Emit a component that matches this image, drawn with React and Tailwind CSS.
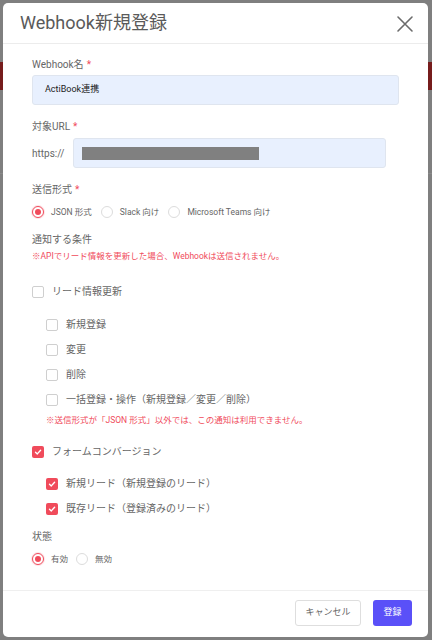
import React from "react";

function Check({ checked }) {
  if (checked) {
    return (
      <span className="flex h-[12px] w-[12px] shrink-0 items-center justify-center rounded-[2px] bg-[#f04b5b]">
        <svg width="8" height="8" viewBox="0 0 8 8">
          <path d="M1.5 4.2 L3.3 5.9 L6.6 2.3" fill="none" stroke="#fff" strokeWidth="1.4" strokeLinecap="round" strokeLinejoin="round" />
        </svg>
      </span>
    );
  }
  return <span className="block h-[12px] w-[12px] shrink-0 rounded-[2px] border border-[#cfcfcf] bg-white" />;
}

function Radio({ checked, className = "" }) {
  if (checked) {
    return (
      <span className={"flex h-[12px] w-[12px] shrink-0 items-center justify-center rounded-full border border-[#f04b5b] bg-white shadow-[0_0_0_1px_rgba(240,75,91,0.15)] " + className}>
        <span className="block h-[6px] w-[6px] rounded-full bg-[#f04b5b]" />
      </span>
    );
  }
  return <span className={"block h-[12px] w-[12px] shrink-0 rounded-full border border-[#dcdcdc] bg-white " + className} />;
}

function Label({ children, req, className = "" }) {
  return (
    <div className={"h-[14px] text-[10px] leading-[14px] text-[#666] " + className}>
      {children}
      {req && <span className="ml-[3px] text-[#f04b5b]">*</span>}
    </div>
  );
}

function CheckRow({ checked, children, className = "" }) {
  return (
    <div className={"flex h-[16px] items-center " + className}>
      <Check checked={checked} />
      <span className="ml-[8px] text-[10px] leading-[16px] text-[#666]">{children}</span>
    </div>
  );
}

export default function App() {
  return (
    <div className="relative h-[640px] w-[432px] overflow-hidden bg-[#7f7f7f] font-[Roboto,'Noto_Sans_CJK_JP',sans-serif]">
      <div className="absolute left-0 right-0 top-[62px] h-[28px] bg-[#761c1c]" />
      <div className="absolute left-0 right-0 top-[173px] h-px bg-[#8a8a8a]" />
      <div className="relative ml-[3px] mt-[3px] flex h-[634px] w-[425px] flex-col rounded-[5px] bg-white">
        {/* header */}
        <div className="flex h-[41px] shrink-0 items-center justify-between border-b border-[#ececec] pl-[17px] pr-[14px]">
          <div className="text-[18px] leading-[24px] text-[#5a5a5a]">Webhook新規登録</div>
          <svg width="18" height="18" viewBox="0 0 18 18" className="mt-[1px]">
            <path d="M2 2 L16 16 M16 2 L2 16" stroke="#6b6b6b" strokeWidth="1.6" strokeLinecap="round" />
          </svg>
        </div>

        {/* body */}
        <div className="flex flex-1 flex-col px-[29px] pt-[14px]">
          <Label req>Webhook名</Label>
          <div className="mt-[3px] flex h-[30px] items-center rounded-[3px] border border-[#dfe5ef] bg-[#e8f0fe] pl-[12px] text-[9px] text-[#222]">
            ActiBook連携
          </div>

          <Label req className="mt-[15px]">対象URL</Label>
          <div className="mt-[4px] flex items-center">
            <span className="w-[41px] text-[10px] text-[#666]">https://</span>
            <div className="flex h-[30px] w-[313px] items-center rounded-[3px] border border-[#dfe5ef] bg-[#e8f0fe] pl-[8px]">
              <div className="h-[13px] w-[177px] bg-[#808080]" />
            </div>
          </div>

          <Label req className="mt-[15px]">送信形式</Label>
          <div className="mt-[8px] flex h-[14px] items-center text-[8.5px] text-[#666]">
            <Radio checked />
            <span className="ml-[7px]">JSON 形式</span>
            <Radio className="ml-[9px]" />
            <span className="ml-[7px]">Slack 向け</span>
            <Radio className="ml-[9px]" />
            <span className="ml-[7px]">Microsoft Teams 向け</span>
          </div>

          <Label className="mt-[14px]">通知する条件</Label>
          <div className="mt-[3px] h-[12px] text-[8.5px] leading-[12px] text-[#f04b5b]">
            ※APIでリード情報を更新した場合、Webhookは送信されません。
          </div>

          <CheckRow className="mt-[22px]">リード情報更新</CheckRow>
          <div className="flex flex-col pl-[14px]">
            <CheckRow className="mt-[17px]">新規登録</CheckRow>
            <CheckRow className="mt-[9px]">変更</CheckRow>
            <CheckRow className="mt-[9px]">削除</CheckRow>
            <CheckRow className="mt-[9px]">一括登録・操作（新規登録／変更／削除）</CheckRow>
            <div className="mt-[6px] h-[12px] text-[8.5px] leading-[12px] text-[#f04b5b]">
              ※送信形式が「JSON 形式」以外では、この通知は利用できません。
            </div>
          </div>

          <CheckRow checked className="mt-[18px]">フォームコンバージョン</CheckRow>
          <div className="flex flex-col pl-[14px]">
            <CheckRow checked className="mt-[16px]">新規リード（新規登録のリード）</CheckRow>
            <CheckRow checked className="mt-[9px]">既存リード（登録済みのリード）</CheckRow>
          </div>

          <Label className="mt-[13px]">状態</Label>
          <div className="mt-[8px] flex h-[14px] items-center text-[8.5px] text-[#666]">
            <Radio checked />
            <span className="ml-[7px]">有効</span>
            <Radio className="ml-[8px]" />
            <span className="ml-[7px]">無効</span>
          </div>
        </div>

        {/* footer */}
        <div className="flex h-[47px] shrink-0 items-start justify-end gap-[12px] border-t border-[#efefef] pr-[16px] pt-[9px]">
          <button className="flex h-[26px] w-[66px] items-center justify-center rounded-[3px] border border-[#dedede] bg-white text-[9px] text-[#666]">
            キャンセル
          </button>
          <button className="flex h-[26px] w-[39px] items-center justify-center rounded-[3px] bg-[#5a50f8] text-[9px] text-white">
            登録
          </button>
        </div>
      </div>
    </div>
  );
}
